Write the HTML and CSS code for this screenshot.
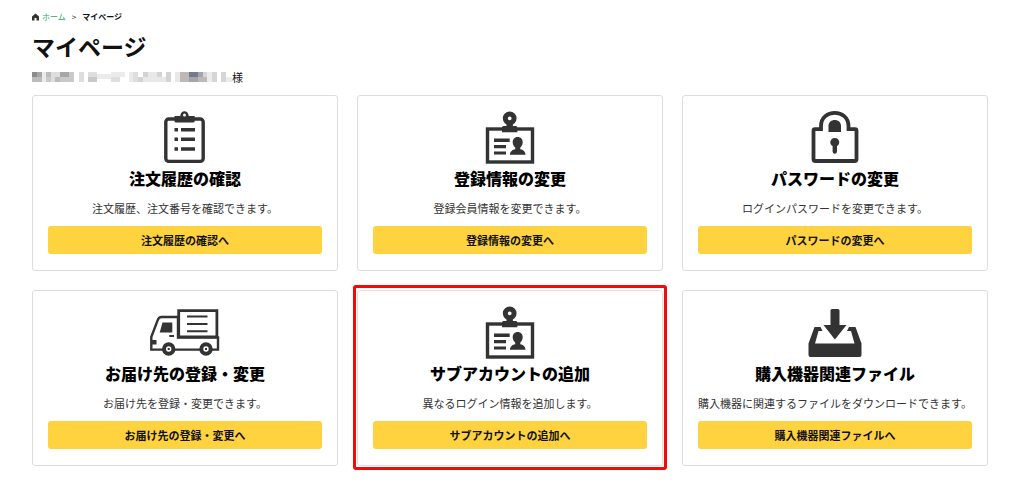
FILE: index.html
```html
<!DOCTYPE html>
<html lang="ja">
<head>
<meta charset="utf-8">
<title>マイページ</title>
<link rel="stylesheet" href="styles.css">
</head>
<body>
<svg class="defs" aria-hidden="true">
  <symbol id="badge" viewBox="0 -3 70 62">
    <rect x="12.500" y="22" width="45" height="33" fill="#fff" stroke="currentColor" stroke-width="3.400"/>
    <circle cx="34.700" cy="11.300" r="4.400" fill="none" stroke="currentColor" stroke-width="5"/>
    <path fill="currentColor" d="M31.500 16h6.400v3h3a1.500 1.500 0 0 1 1.500 1.500v4.800H27v-4.800a1.500 1.500 0 0 1 1.500-1.500h3zM19 31.500h15.700v3.400H19zM19 38h12v3.200H19zM19 44.400h12v3.200H19zM42.700 30c3 0 5 2.200 5 5.200 0 2.200-1 4.200-2.400 5.300v1.700c2.700.6 5.200 2 5.200 5.600H35c0-3.600 2.500-5 5.200-5.600v-1.700c-1.500-1.100-2.500-3.100-2.500-5.300 0-3 2-5.200 5-5.200z"/>
  </symbol>
</svg>
<div class="page">
  <nav class="breadcrumb" aria-label="パンくず">
    <a href="#"><svg class="home" viewBox="0 0 7 8" aria-hidden="true"><path d="M3.500 0.500 7 3.500V7.500H4.500V5h-2v2.500H0v-4z"/></svg>ホーム</a>
    <span>&gt;</span>
    <b>マイページ</b>
  </nav>
  <h1>マイページ</h1>
  <p class="user"><svg class="mosaic" viewBox="0 0 200 10" shape-rendering="crispEdges" aria-hidden="true">
    <path fill="#8c8c8c" d="M0 0h5v5H0z"/>
    <path fill="#a6a6a6" d="M5 0h5v5H5zM27 0h10v5H27z"/>
    <path fill="#bcbcbc" d="M0 5h10v5H0zM14 0h5v5h-5zM23 5h5v5h-5z"/>
    <path fill="#c9c9c9" d="M14 5h5v5h-5zM28 5h14v5H28zM37 0h5v5h-5zM56 5h9v5h-9z"/>
    <path fill="#dedede" d="M23 0h5v5h-5zM19 0h4v10h-4zM47 0h5v10h-5zM56 0h9v5h-9zM79 5h9v5h-9zM101 0h5v10h-5z"/>
    <path fill="#ebebeb" d="M10 0h4v10h-4zM65 2h14v5H65zM79 0h14v5H79zM97 0h4v10h-4z"/>
    <path fill="#d3d3d3" d="M106 5h5v5h-5zM111 0h5v5h-5zM125 0h5v5h-5zM134 0h5v10h-5z"/>
    <path fill="#e8e8e8" d="M111 5h14v5h-14zM116 0h9v5h-9zM125 5h9v5h-9zM143 0h5v10h-5z"/>
    <path fill="#bfb8b8" d="M148 0h9v10h-9zM166 5h9v5h-9z"/>
    <path fill="#737c8c" d="M157 0h9v5h-9z"/>
    <path fill="#a2a5ab" d="M157 5h9v5h-9zM166 0h5v5h-5z"/>
    <path fill="#d6d6d6" d="M171 0h4v5h-4zM180 0h5v10h-5zM189 0h5v10h-5z"/>
    <path fill="#ececec" d="M175 0h5v10h-5zM194 5h6v5h-6z"/>
  </svg>様</p>
  <main class="cards">
    <section class="card">
      <svg class="icon" viewBox="0 0 70 62" aria-hidden="true">
        <rect x="15.800" y="15" width="37.400" height="42.400" rx="3" fill="none" stroke="currentColor" stroke-width="3.400"/>
        <path fill="currentColor" d="M24.500 12h5.800c0-6.500 8.400-6.500 8.400 0h6v5a1.500 1.500 0 0 1-1.500 1.500H26a1.500 1.500 0 0 1-1.500-1.500z"/>
        <circle cx="34.500" cy="11" r="1.500" fill="#fff"/>
        <path fill="currentColor" d="M24.500 24h3.500v3.400h-3.500zM31 24h14v3.400H31zM24.500 33.600h3.500v3.400h-3.500zM31 33.600h14v3.400H31zM24.500 43.300h3.500v3.400h-3.500zM31 43.300h14v3.400H31z"/>
      </svg>
      <h2>注文履歴の確認</h2>
      <p>注文履歴、注文番号を確認できます。</p>
      <a class="button" href="#">注文履歴の確認へ</a>
    </section>
    <section class="card">
      <svg class="icon" aria-hidden="true"><use href="#badge"/></svg>
      <h2>登録情報の変更</h2>
      <p>登録会員情報を変更できます。</p>
      <a class="button" href="#">登録情報の変更へ</a>
    </section>
    <section class="card">
      <svg class="icon" viewBox="0 0 70 62" aria-hidden="true">
        <path fill="none" stroke="currentColor" stroke-width="3.800" d="M21 25.200V22c0-17.500 27.500-17.500 27.500 0v3.200H55a1.500 1.500 0 0 1 1.500 1.500V55a2 2 0 0 1-2 2H15.500a2 2 0 0 1-2-2V26.700a1.500 1.500 0 0 1 1.500-1.500h6z"/>
        <path fill="currentColor" d="M28.500 28v-6c0-8 12.500-8 12.500 0v6zM34.800 34c5 0 6 6.500 2.200 8v5.500a2 2 0 0 1-4.400 0V42c-3.800-1.500-2.800-8 2.200-8z"/>
      </svg>
      <h2>パスワードの変更</h2>
      <p>ログインパスワードを変更できます。</p>
      <a class="button" href="#">パスワードの変更へ</a>
    </section>
    <section class="card">
      <svg class="icon" viewBox="0 0 70 62" aria-hidden="true">
        <g fill="none" stroke="currentColor" stroke-width="2.400">
          <path fill="#fff" d="M28 18H11.500c-2 0-3 1-3.800 3.200L1.300 38v12.600H68V38.500H28z"/>
          <path fill="#fff" stroke-width="2.800" d="M28.700 11.700h38.200v26.200H28.700z"/>
          <path stroke-width="2" d="M37 17.500h20.500M37 25h20.500M37 32.300h20.500M19.300 37H24"/>
          <circle cx="18.700" cy="50" r="4.700" fill="#fff" stroke-width="4"/>
          <circle cx="56" cy="50" r="4.700" fill="#fff" stroke-width="4"/>
        </g>
        <path fill="currentColor" d="M12.500 23.500h9.800v10H9.700zM1 41h5.500v4.500H1zM17.700 49h2v2h-2zM55 49h2v2h-2z"/>
      </svg>
      <h2>お届け先の登録・変更</h2>
      <p>お届け先を登録・変更できます。</p>
      <a class="button" href="#">お届け先の登録・変更へ</a>
    </section>
    <section class="card marked">
      <svg class="icon" aria-hidden="true"><use href="#badge"/></svg>
      <h2>サブアカウントの追加</h2>
      <p>異なるログイン情報を追加します。</p>
      <a class="button" href="#">サブアカウントの追加へ</a>
    </section>
    <section class="card">
      <svg class="icon" viewBox="0 -6 70 62" aria-hidden="true">
        <path fill="currentColor" d="M32 4h6a1.500 1.500 0 0 1 1.500 1.500V20h7L34.900 34.500 23.500 20h7V5.500A1.500 1.500 0 0 1 32 4zM14.500 22h6l2 4h-4L15 38.500h39.500L51 26h-4l2-4h6.500L61.500 38.500V50a2 2 0 0 1-2 2h-49a2 2 0 0 1-2-2V38.500z"/>
      </svg>
      <h2>購入機器関連ファイル</h2>
      <p>購入機器に関連するファイルをダウンロードできます。</p>
      <a class="button" href="#">購入機器関連ファイルへ</a>
    </section>
  </main>
</div>
</body>
</html>
```
FILE: styles.css
```css
* { box-sizing: border-box; }
body { margin: 0; background: #fff; color: #111; font-family: "Noto Sans CJK JP", sans-serif; font-size: 11px; line-height: 16px; }
h1, h2, p { margin: 0; }
.defs { position: absolute; width: 0; height: 0; }
.page { padding: 9px 36px 16px 32px; }
.breadcrumb { display: flex; gap: 6px; font-size: 8px; }
.breadcrumb a { display: flex; align-items: center; gap: 3px; color: #2aa866; text-decoration: none; }
.home { width: 7px; height: 8px; fill: #333; }
h1 { margin-top: 5px; font-size: 23px; line-height: 32px; }
.user { display: flex; align-items: center; margin-top: 7px; }
.mosaic { width: 200px; height: 10px; }
.cards { display: grid; grid-template-columns: repeat(3, 1fr); gap: 19px; margin-top: 10px; }
.card { position: relative; display: flex; flex-direction: column; align-items: center; padding: 8px 15px 16px; border: 1px solid #ddd; border-radius: 3px; }
.icon { width: 70px; height: 62px; color: #333; }
.card h2 { color: #000; font-size: 16px; line-height: 24px; font-weight: 900; }
.card p { margin: 10px 0; white-space: nowrap; color: #333; }
.button { align-self: stretch; padding: 6px; border-radius: 3px; background: #ffd23f; color: #111; font-weight: 700; text-align: center; text-decoration: none; }
.marked { border-color: #fbd5d5; }
.marked::after { content: ""; position: absolute; inset: -6px -5px -5px; border: 3px solid #f00b0b; border-radius: 3px; }
```
